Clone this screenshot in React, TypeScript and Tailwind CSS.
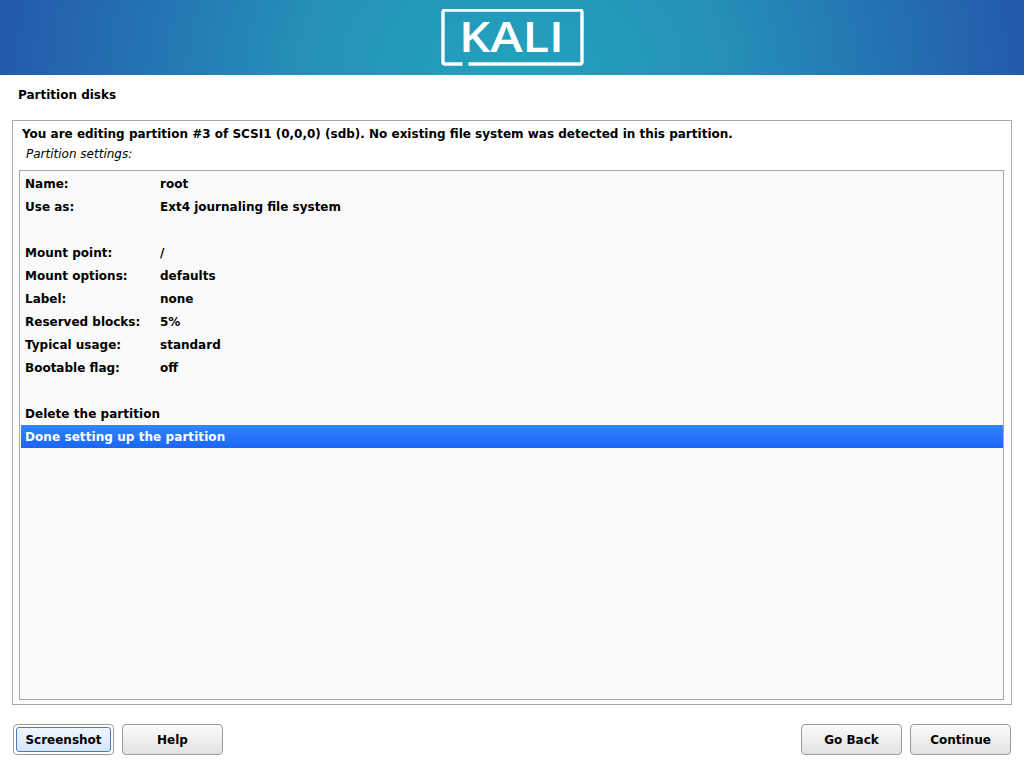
const rows = [
  { label: "Name:", value: "root" },
  { label: "Use as:", value: "Ext4 journaling file system" },
  null,
  { label: "Mount point:", value: "/" },
  { label: "Mount options:", value: "defaults" },
  { label: "Label:", value: "none" },
  { label: "Reserved blocks:", value: "5%" },
  { label: "Typical usage:", value: "standard" },
  { label: "Bootable flag:", value: "off" },
  null,
];

function Button({ label }: { label: string }) {
  return (
    <button className="w-[101px] h-[31px] rounded-[4px] border border-[#9a9a9a] bg-gradient-to-b from-[#fbfbfb] to-[#e2e2e2] text-[12px] font-bold text-black">
      {label}
    </button>
  );
}

function Logo() {
  return (
    <svg width="144" height="58" viewBox="0 0 144 58" className="block">
      <path
        d="M27.5 55H139a2 2 0 0 0 2-2V3a2 2 0 0 0-2-2H4a2 2 0 0 0-2 2V53a2 2 0 0 0 2 2H21.5"
        fill="none"
        stroke="white"
        strokeWidth="3.4"
      />
      <text
        x="18"
        y="43"
        fill="white"
        fontSize="41"
        fontWeight="600"
        fontFamily="'Open Sans', sans-serif"
        textLength="105"
        lengthAdjust="spacingAndGlyphs"
      >
        KALI
      </text>
    </svg>
  );
}

export default function App() {
  return (
    <div className="w-[1024px] h-[768px] overflow-hidden bg-white flex flex-col font-['DejaVu_Sans',sans-serif] text-[12px] text-black">
      <header className="h-[75px] shrink-0 bg-[radial-gradient(ellipse_530px_420px_at_50%_100%,#22a2bd_0%,#2590b8_40%,#2473b2_70%,#2456ab_100%)] flex justify-center pt-[9px] pl-[1px]">
        <Logo />
      </header>

      <h1 className="mt-[12px] ml-[18px] h-[17px] leading-[17px] font-bold">Partition disks</h1>

      <section className="mt-[16px] mx-[12px] h-[585px] border border-[#a8a8a8] pl-[6px] pr-[7px] pb-[4px] flex flex-col">
        <p className="ml-[3px] mt-[4px] h-[18px] leading-[18px] font-bold whitespace-nowrap">
          You are editing partition #3 of SCSI1 (0,0,0) (sdb). No existing file system was detected in this partition.
        </p>
        <p className="ml-[7px] mt-[2px] h-[18px] leading-[18px] italic">Partition settings:</p>
        <div className="mt-[7px] flex-1 border border-[#a8a8a8] bg-[#fafafa] pl-[1px]">
          <div className="pt-[1px]">
            {rows.map((row, i) => (
              <div key={i} className="h-[23px] pt-[1px] leading-[23px] pl-[4px] flex font-bold">
                {row && (
                  <>
                    <span className="w-[135px]">{row.label}</span>
                    <span>{row.value}</span>
                  </>
                )}
              </div>
            ))}
            <div className="h-[23px] pt-[1px] leading-[23px] pl-[4px] font-bold tracking-[0.05px]">Delete the partition</div>
            <div className="h-[23px] pt-[1px] leading-[23px] pl-[4px] font-bold tracking-[0.07px] text-white bg-gradient-to-b from-[#3385ff] to-[#1a66f5]">
              Done setting up the partition
            </div>
          </div>
        </div>
      </section>

      <footer className="mt-[19px] px-[13px] flex items-start justify-between">
        <div className="flex gap-[8px]">
          <div className="w-[101px] h-[31px] rounded-[4px] border border-[#9a9a9a] p-[2px] bg-white">
            <button className="w-full h-full rounded-[3px] border border-[#4a78c0] bg-gradient-to-b from-[#f0f6ff] to-[#d6e6fb] text-[12px] font-bold text-black">
              Screenshot
            </button>
          </div>
          <Button label="Help" />
        </div>
        <div className="flex gap-[8px]">
          <Button label="Go Back" />
          <Button label="Continue" />
        </div>
      </footer>
    </div>
  );
}
